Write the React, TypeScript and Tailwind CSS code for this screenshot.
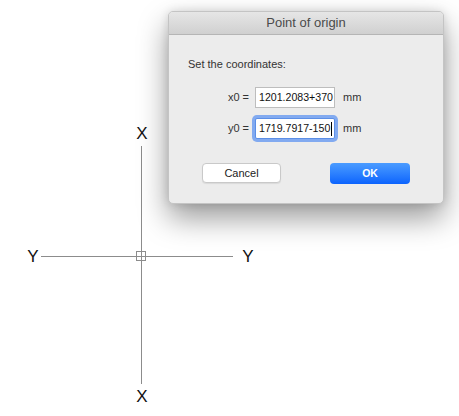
import React from "react";

const sans = "font-['Liberation_Sans','Helvetica',sans-serif]";

// crosshair with axis labels drawn on the sheet
function Axes() {
  return (
    <svg className="absolute inset-0" width="459" height="416" viewBox="0 0 459 416">
      <g stroke="#8c8c8c" strokeWidth="1" fill="none" shapeRendering="crispEdges">
        <line x1="141.5" y1="146" x2="141.5" y2="384" />
        <line x1="41" y1="256.5" x2="233" y2="256.5" />
        <rect x="136.5" y="251.5" width="9" height="9" />
      </g>
      <g fontFamily="Liberation Sans, Arial, sans-serif" fontSize="17" fill="#111" textAnchor="middle">
        <text x="142" y="139">X</text>
        <text x="142" y="402">X</text>
        <text x="33" y="262">Y</text>
        <text x="248" y="262">Y</text>
      </g>
    </svg>
  );
}

function Field({ label, value, focused }: { label: string; value: string; focused?: boolean }) {
  return (
    <div className="flex items-center">
      <span className="w-[81px] text-right pr-[1px] text-[11px] text-[#333]">{label}</span>
      <div
        className={`ml-[5px] w-[80px] h-[21px] bg-white flex items-center pl-[3px] text-[10.6px] text-[#111] whitespace-nowrap overflow-hidden ${
          focused
            ? "border border-[#5c8fe6] rounded-[2px] shadow-[0_0_0_3px_#82aaf0]"
            : "border border-[#bdbdbd]"
        }`}
      >
        {value}
        {focused && <span className="inline-block shrink-0 w-[1px] h-[14px] bg-black ml-[1px]" />}
      </div>
      <span className="ml-[8px] text-[11px] text-[#333]">mm</span>
    </div>
  );
}

export default function App() {
  return (
    <div className={`relative w-[459px] h-[416px] bg-white overflow-hidden ${sans}`}>
      <Axes />

      {/* dialog window */}
      <div className="absolute left-[168px] top-[11px] w-[276px] h-[193px] rounded-[5px] bg-[#ececec] border border-[#c4c4c4] shadow-[0_14px_30px_rgba(0,0,0,0.4),0_0_10px_rgba(0,0,0,0.12)] overflow-hidden flex flex-col">
        <div className="h-[23px] shrink-0 flex items-center justify-center bg-gradient-to-b from-[#e6e6e6] to-[#d0d0d0] border-b border-[#b5b5b5] text-[13px] text-[#4b4b4b]">
          Point of origin
        </div>

        <div className="flex flex-col">
          <p className="mt-[22px] ml-[19px] text-[11px] leading-[14px] text-[#333]">Set the coordinates:</p>

          <div className="mt-[16px] flex flex-col gap-[10px]">
            <Field label="x0 =" value="1201.2083+370" />
            <Field label="y0 =" value="1719.7917-150" focused />
          </div>

          <div className="mt-[24px] flex pl-[33px] gap-[49px]">
            <button className="w-[79px] h-[20px] bg-white border border-[#c9c9c9] rounded-[4px] shadow-[0_1px_1px_rgba(0,0,0,0.08)] text-[11px] text-[#222]">
              Cancel
            </button>
            <button className="w-[80px] h-[21px] rounded-[4px] bg-gradient-to-b from-[#4a9bff] to-[#0b63fd] text-white text-[10.5px] font-bold">
              OK
            </button>
          </div>
        </div>
      </div>
    </div>
  );
}
